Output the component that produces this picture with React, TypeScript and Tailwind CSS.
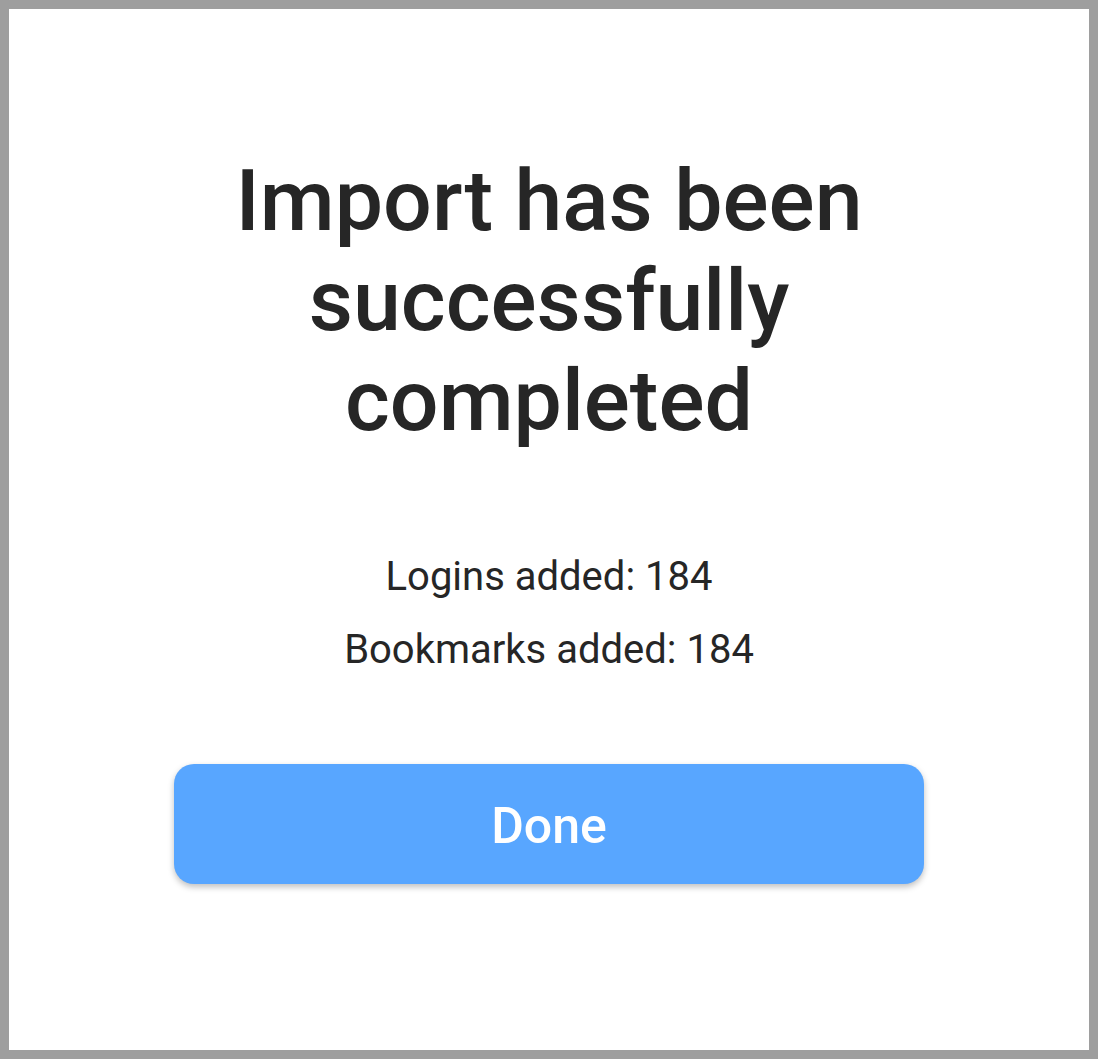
import React from "react";

export default function App() {
  return (
    <div className="w-[1098px] h-[1059px] bg-[#9e9e9e] p-[9px]" style={{ fontFamily: "Roboto, 'Noto Sans', sans-serif" }}>
      <div className="w-full h-full bg-white flex flex-col items-center pt-[142px]">
        <h1 className="text-[86px] leading-[100px] font-medium text-[#262626] text-center">
          Import has been
          <br />
          successfully
          <br />
          completed
        </h1>
        <div className="mt-[89px] flex flex-col items-center text-[40px] leading-[73px] text-[#262626]">
          <p>Logins added: 184</p>
          <p>Bookmarks added: 184</p>
        </div>
        <button className="mt-[78px] w-[750px] h-[120px] rounded-[20px] bg-[#58a6ff] text-white text-[50px] font-medium flex items-center justify-center pt-[4px] shadow-[0_3px_6px_rgba(0,0,0,0.25)]">
          Done
        </button>
      </div>
    </div>
  );
}
